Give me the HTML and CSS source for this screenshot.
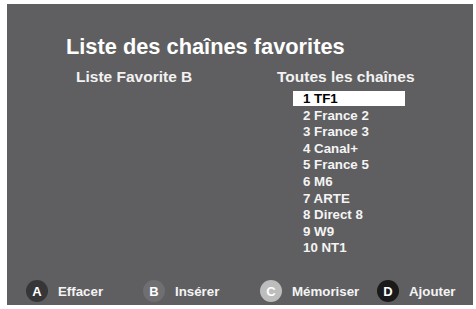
FILE: index.html
```html
<!DOCTYPE html>
<html lang="fr">
<head>
<meta charset="utf-8">
<title>Liste des chaînes favorites</title>
<link rel="stylesheet" href="styles.css">
</head>
<body>
<div class="screen">
  <h1 class="title">Liste des chaînes favorites</h1>
  <div class="columns">
    <section class="col col-left">
      <h2 class="col-title">Liste Favorite B</h2>
    </section>
    <section class="col col-right">
      <h2 class="col-title">Toutes les chaînes</h2>
      <ul class="channels">
        <li class="channel selected">1 TF1</li>
        <li class="channel">2 France 2</li>
        <li class="channel">3 France 3</li>
        <li class="channel">4 Canal+</li>
        <li class="channel">5 France 5</li>
        <li class="channel">6 M6</li>
        <li class="channel">7 ARTE</li>
        <li class="channel">8 Direct 8</li>
        <li class="channel">9 W9</li>
        <li class="channel">10 NT1</li>
      </ul>
    </section>
  </div>
  <div class="footer">
    <div class="action"><span class="key key-a">A</span><span class="label">Effacer</span></div>
    <div class="action"><span class="key key-b">B</span><span class="label">Insérer</span></div>
    <div class="action"><span class="key key-c">C</span><span class="label">Mémoriser</span></div>
    <div class="action"><span class="key key-d">D</span><span class="label">Ajouter</span></div>
  </div>
</div>
</body>
</html>
```
FILE: styles.css
```css
html, body {
  margin: 0;
  padding: 0;
  background: #ffffff;
}
body {
  font-family: "Liberation Sans", Arial, sans-serif;
  font-weight: bold;
}
.screen {
  margin: 4px 3px 0 7px;
  height: 301px;
  background: #5f5f61;
  box-sizing: border-box;
  padding-top: 31px;
  padding-bottom: 3px;
  display: flex;
  flex-direction: column;
}
.title {
  margin: 0;
  padding-left: 59px;
  font-size: 21.8px;
  line-height: 24px;
  color: #ffffff;
  font-weight: bold;
}
.columns {
  display: grid;
  grid-template-columns: 201px 1fr;
  padding-left: 69px;
  margin-top: 9px;
}
.col-title {
  margin: 0;
  font-size: 15.5px;
  line-height: 18px;
  color: #f2f2f2;
  font-weight: bold;
}
.channels {
  list-style: none;
  margin: 5px 0 0 16px;
  padding: 0;
  width: 112px;
  display: flex;
  flex-direction: column;
  gap: 1.6px;
}
.channel {
  height: 15px;
  line-height: 15px;
  padding-left: 10px;
  font-size: 13.3px;
  color: #f4f4f4;
}
.channel.selected {
  background: #ffffff;
  color: #000000;
}
.footer {
  margin-top: auto;
  display: grid;
  grid-template-columns: repeat(4, 117px);
  padding-left: 19px;
}
.action {
  display: flex;
  align-items: center;
  gap: 10px;
}
.key {
  width: 22px;
  height: 22px;
  border-radius: 50%;
  display: flex;
  align-items: center;
  justify-content: center;
  color: #ffffff;
  font-size: 13px;
}
.key-a { background: #363638; }
.key-b { background: #6f6f71; }
.key-c { background: #bdbdbd; }
.key-d { background: #1a1a1a; }
.label {
  font-size: 13.3px;
  color: #f4f4f4;
}
```
